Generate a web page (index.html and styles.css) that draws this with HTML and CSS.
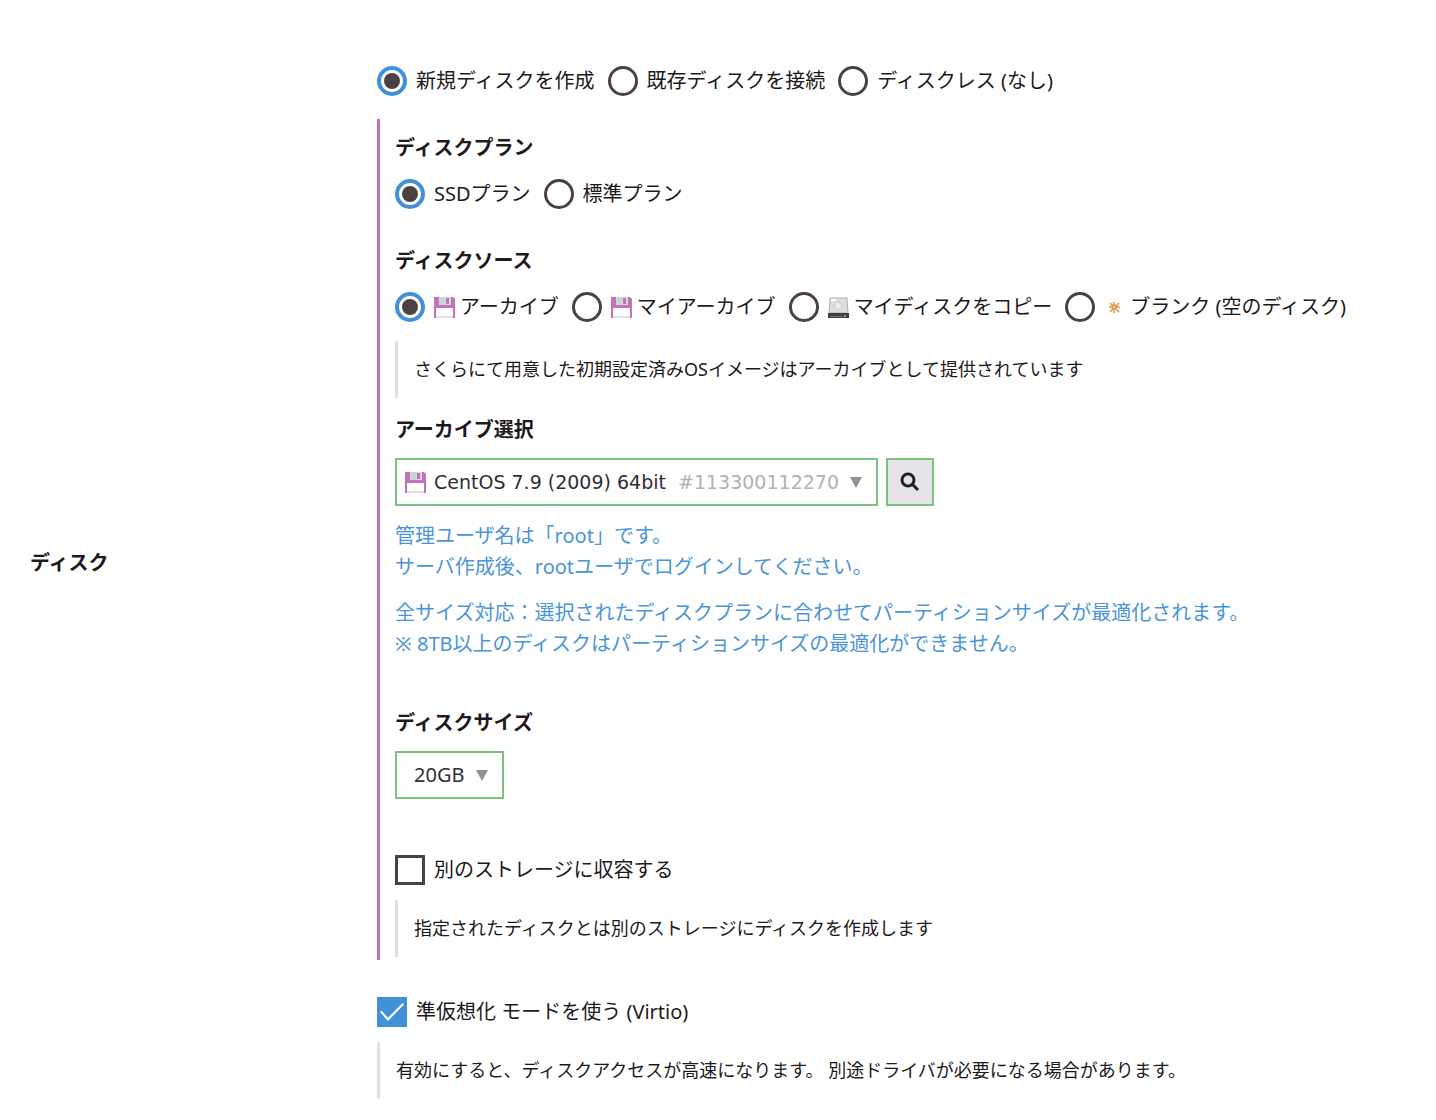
FILE: index.html
```html
<!DOCTYPE html>
<html lang="ja">
<head>
    <meta charset="UTF-8">
    <meta name="viewport" content="width=device-width, initial-scale=1.0">
    <title>ディスク</title>
    <link rel="stylesheet" href="styles.css">
</head>
<body>
<svg class="defs" aria-hidden="true">
    <symbol id="floppy" viewBox="0 0 21 21">
        <path d="M0 0h19l2 2v19H0z" fill="#bf73b8"/>
        <path d="M5 0h12v8H5z" fill="#dfd5df"/>
        <path d="M6 0h5v8H6z" fill="#c9d4ce"/>
        <path d="M12 1h3v6h-3z" fill="#bf73b8"/>
        <path d="M2 11h17v10H2z" fill="#fff"/>
        <path d="M2 19h17v2H2z" fill="#e4dfe6"/>
    </symbol>
</svg>

<form class="row" action="#">
    <h2 class="row-name">ディスク</h2>

    <div class="row-body">
        <div class="choices">
            <label class="choice"><input type="radio" name="disk" checked>新規ディスクを作成</label>
            <label class="choice"><input type="radio" name="disk">既存ディスクを接続</label>
            <label class="choice"><input type="radio" name="disk">ディスクレス (なし)</label>
        </div>

        <div class="panel">
            <h3>ディスクプラン</h3>
            <div class="choices group">
                <label class="choice"><input type="radio" name="plan" checked>SSDプラン</label>
                <label class="choice"><input type="radio" name="plan">標準プラン</label>
            </div>

            <h3>ディスクソース</h3>
            <div class="choices">
                <label class="choice"><input type="radio" name="source" checked><svg class="icon"><use href="#floppy"/></svg>アーカイブ</label>
                <label class="choice"><input type="radio" name="source"><svg class="icon"><use href="#floppy"/></svg>マイアーカイブ</label>
                <label class="choice"><input type="radio" name="source">
                    <svg class="icon" viewBox="0 0 21 21">
                        <path d="M2 1h17l1 15H1z" fill="#dcdcdc" stroke="#b0b0b0"/>
                        <path d="M3 2h5v2H3z" fill="#fff"/>
                        <circle cx="10" cy="9" r="4" fill="#e6e6e6" stroke="#cdcdcd"/>
                        <circle cx="10" cy="9" r="1" fill="#fff"/>
                        <path d="M0 16h21v5H0z" fill="#443c3d"/>
                        <path d="M2 19h13v1H2z" fill="#777"/>
                        <path d="M16 18h2v2h-2z" fill="#4fc24f"/>
                    </svg>マイディスクをコピー</label>
                <label class="choice"><input type="radio" name="source">
                    <svg class="icon" viewBox="0 0 21 21" stroke="#e0984a" stroke-width="1.500" fill="none">
                        <path d="M10 5v4M10 12v4M5 10h4M12 10h4M6 6l3 3M12 12l3 3M15 6l-3 3M9 12l-3 3"/>
                        <circle cx="10" cy="10" r="2" fill="#f3c791"/>
                    </svg>ブランク (空のディスク)</label>
            </div>
            <p class="note">さくらにて用意した初期設定済みOSイメージはアーカイブとして提供されています</p>

            <h3 class="tight">アーカイブ選択</h3>
            <div class="picker">
                <div class="drop archive">
                    <svg class="icon"><use href="#floppy"/></svg>
                    <select aria-label="アーカイブ選択">
                        <option>CentOS 7.9 (2009) 64bit</option>
                    </select>
                    <span class="archive-id">#113300112270</span>
                    <span class="arrow"></span>
                </div>
                <button class="search" type="button" aria-label="検索">
                    <svg viewBox="0 0 20 20" fill="none" stroke="#231f26">
                        <circle cx="8" cy="8" r="6" stroke-width="3"/>
                        <path d="M12 12l6 6" stroke-width="3"/>
                    </svg>
                </button>
            </div>
            <div class="help">
                <p>管理ユーザ名は「root」です。<br>サーバ作成後、rootユーザでログインしてください。</p>
                <p>全サイズ対応：選択されたディスクプランに合わせてパーティションサイズが最適化されます。<br>※ 8TB以上のディスクはパーティションサイズの最適化ができません。</p>
            </div>

            <h3 class="tight">ディスクサイズ</h3>
            <div class="drop size">
                <select aria-label="ディスクサイズ">
                    <option>20GB</option>
                </select>
                <span class="arrow"></span>
            </div>

            <label class="choice"><input type="checkbox" name="separate">別のストレージに収容する</label>
            <p class="note">指定されたディスクとは別のストレージにディスクを作成します</p>
        </div>

        <label class="choice"><input type="checkbox" name="virtio" checked>準仮想化 モードを使う (Virtio)</label>
        <p class="note">有効にすると、ディスクアクセスが高速になります。 別途ドライバが必要になる場合があります。</p>
    </div>
</form>
</body>
</html>
```
FILE: styles.css
```css
* {
    margin: 0;
    padding: 0;
    box-sizing: border-box;
}
body {
    background-color: #fff;
    color: #1d191c;
    font-family: "Noto Sans", "Noto Sans CJK JP", sans-serif;
    font-size: 20px;
    line-height: 30px;
}
.defs {
    position: absolute;
    width: 0;
    height: 0;
}
.row {
    display: flex;
    align-items: center;
    padding: 66px 30px 20px;
}
.row-name {
    flex: none;
    width: 347px;
    padding-bottom: 40px;
}
.row-body {
    flex: 1;
    min-width: 0;
}
h2, h3 {
    font-size: 20px;
    font-weight: bold;
    line-height: 30px;
}
h3 {
    margin-bottom: 16px;
}
h3.tight {
    margin-bottom: 13px;
}

/* radios and checkboxes */
.choices {
    display: flex;
    flex-wrap: wrap;
    gap: 13px;
}
.choices.group {
    margin-bottom: 37px;
}
.choice {
    display: flex;
    align-items: center;
    line-height: 30px;
}
input[type=radio],
input[type=checkbox] {
    appearance: none;
    flex: none;
    display: grid;
    place-items: center;
    width: 30px;
    height: 30px;
    margin-right: 9px;
    border: 3px solid #4b4042;
    background-color: #fff;
}
input[type=radio] {
    border-radius: 50%;
}
input[type=radio]:checked {
    border: 4px solid #4091da;
}
input[type=radio]:checked::before {
    content: "";
    width: 16px;
    height: 16px;
    border-radius: 50%;
    background-color: #4b4042;
}
input[type=checkbox]:checked {
    border: 0;
    background-color: #4091da;
}
input[type=checkbox]:checked::before {
    content: "";
    width: 24px;
    height: 18px;
    background-color: #fff;
    clip-path: polygon(0 50%, 6% 42%, 33% 82%, 94% 0, 100% 8%, 33% 100%);
}
.icon {
    flex: none;
    width: 21px;
    height: 21px;
    margin-right: 5px;
}

.panel {
    margin: 23px 0 37px;
    padding: 14px 0 3px 15px;
    border-left: 3px solid #bf73b5;
}
.note {
    margin-top: 15px;
    padding: 13px 0 14px 16px;
    border-left: 3px solid #dfe0e2;
    font-size: 18px;
}
.choices + .note {
    margin: 19px 0 17px;
}

/* drop-downs */
.picker {
    display: flex;
    gap: 8px;
}
.drop {
    display: flex;
    align-items: center;
    width: max-content;
    height: 48px;
    border: 2px solid #7cc47e;
}
.drop select {
    appearance: none;
    border: 0;
    outline: none;
    background: none;
    color: #332e33;
    font: inherit;
}
.archive {
    padding: 0 14px 0 8px;
    font-family: "DejaVu Sans", sans-serif;
    font-size: 19px;
}
.archive .icon {
    margin-right: 8px;
}
.archive-id {
    margin-left: 12px;
    color: #b3b1b0;
}
.arrow {
    margin-left: 11px;
    border: 6px solid transparent;
    border-top: 11px solid #95918c;
    border-bottom: 0;
}
.search {
    display: grid;
    place-items: center;
    width: 48px;
    height: 48px;
    border: 2px solid #7cc47e;
    background-color: #e5e2e8;
}
.search svg {
    width: 20px;
    height: 20px;
}
.size {
    margin-bottom: 56px;
    padding: 0 14px 0 17px;
}
.help {
    margin: 14px 0 49px;
    color: #4a94d9;
    line-height: 31px;
}
.help p + p {
    margin-top: 15px;
}
```
